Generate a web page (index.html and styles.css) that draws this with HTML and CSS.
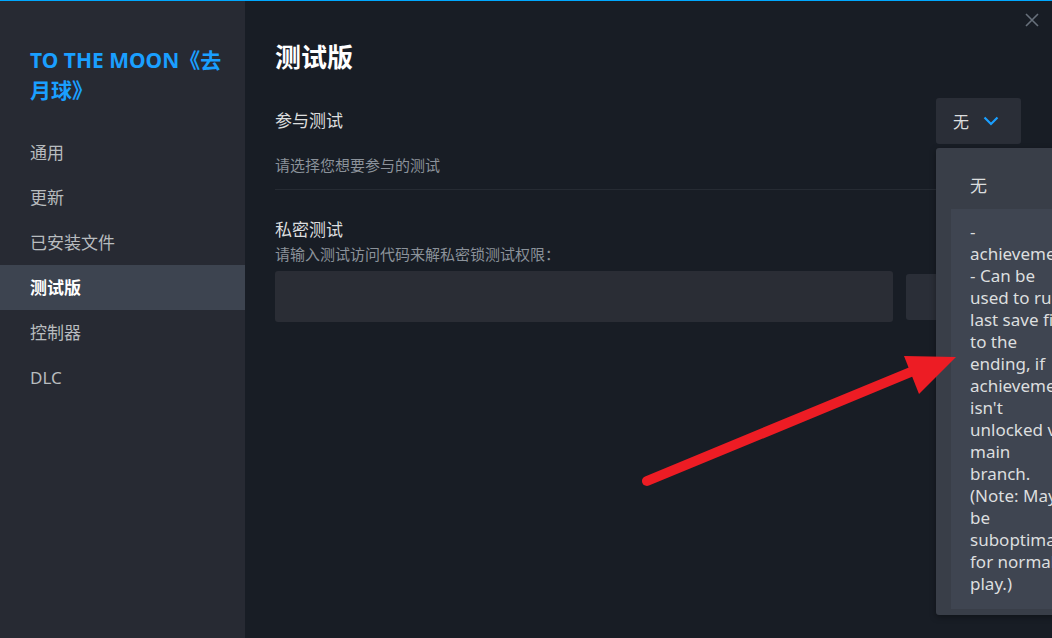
FILE: index.html
```html
<!DOCTYPE html>
<html lang="zh-CN">
<head>
<meta charset="UTF-8">
<meta name="viewport" content="width=device-width, initial-scale=1.0">
<title>测试版</title>
<link rel="stylesheet" href="styles.css">
</head>
<body>
<div class="window">
  <!-- Sidebar -->
  <div class="sidebar">
    <h2 class="game-title">TO THE MOON《去月球》</h2>
    <ul class="nav">
      <li>通用</li>
      <li>更新</li>
      <li>已安装文件</li>
      <li class="active">测试版</li>
      <li>控制器</li>
      <li>DLC</li>
    </ul>
  </div>

  <!-- Main -->
  <div class="main">
    <button type="button" class="close" aria-label="关闭">
      <svg width="14" height="14" viewBox="0 0 14 14"><path d="M1 1 L13 13 M13 1 L1 13" stroke="#67707b" stroke-width="1.6" fill="none"/></svg>
    </button>

    <h1>测试版</h1>

    <div class="row">
      <span class="label">参与测试</span>
      <div class="select">
        <button type="button" class="select-btn">
          <span>无</span>
          <svg width="16" height="10" viewBox="0 0 16 10"><path d="M1.5 1.5 L8 8 L14.5 1.5" stroke="#1a9fff" stroke-width="2.2" fill="none"/></svg>
        </button>
        <div class="menu">
          <div class="option">无</div>
          <!-- description is wrapped by the client at a narrow width -->
          <div class="option hover">-<br>achievement<br>- Can be<br>used to run<br>last save file<br>to the<br>ending, if<br>achievement<br>isn't<br>unlocked via<br>main<br>branch.<br>(Note: May<br>be<br>suboptimal<br>for normal<br>play.)</div>
        </div>
      </div>
    </div>
    <p class="hint">请选择您想要参与的测试</p>

    <div class="group">
      <div class="label">私密测试</div>
      <p class="hint tight">请输入测试访问代码来解私密锁测试权限：</p>
      <div class="code-row">
        <input type="text" class="code-input">
        <button type="button" class="code-btn">检查</button>
      </div>
    </div>
  </div>
</div>

<!-- annotation arrow -->
<svg class="arrow" width="1052" height="638" viewBox="0 0 1052 638">
  <line x1="647" y1="481" x2="918" y2="369" stroke="#ed1c24" stroke-width="10" stroke-linecap="round"/>
  <polygon points="904,356 956,357 919,394" fill="#ed1c24"/>
</svg>
</body>
</html>
```

FILE: styles.css
```css
html, body {
  margin: 0;
  height: 100%;
  overflow: hidden;
}
body {
  font-family: 'Noto Sans', 'Noto Sans CJK SC', sans-serif;
  background-color: #181d25;
  color: #dcdedf;
}
.window {
  display: flex;
  height: 100%;
  border-top: 1px solid #00a8ff;
  box-sizing: border-box;
}
.sidebar {
  width: 245px;
  flex-shrink: 0;
  background-color: #272a33;
}
.game-title {
  margin: 44px 20px 0 30px;
  font-size: 21px;
  line-height: 30px;
  font-weight: bold;
  color: #1a9fff;
}
.nav {
  list-style: none;
  margin: 25px 0 0;
  padding: 0;
}
.nav li {
  height: 45px;
  line-height: 45px;
  padding-left: 30px;
  font-size: 17px;
  color: #b8bcbf;
}
.nav li.active {
  background-color: #3d4450;
  color: #ffffff;
  font-weight: bold;
}
.main {
  flex: 1;
  position: relative;
  padding: 0 31px 0 30px;
}
.close {
  position: absolute;
  top: 12px;
  right: 12px;
  background: none;
  border: none;
  padding: 0;
  width: 16px;
  height: 16px;
  cursor: pointer;
}
h1 {
  margin: 38px 0 0;
  font-size: 26px;
  line-height: 36px;
  font-weight: bold;
  color: #ffffff;
}
.row {
  display: flex;
  justify-content: space-between;
  align-items: center;
  margin-top: 23px;
}
.row .label {
  margin-bottom: 4px;
}
.label {
  font-size: 17px;
  color: #dcdedf;
}
.hint {
  margin: 10px 0 0;
  font-size: 15px;
  line-height: 22px;
  color: #8b929a;
  padding-bottom: 13px;
  border-bottom: 1px solid #262b33;
}
.hint.tight {
  margin-top: 2px;
  padding-bottom: 6px;
  border-bottom: none;
}
.select {
  position: relative;
}
.select-btn {
  display: flex;
  align-items: center;
  gap: 14px;
  width: 85px;
  height: 46px;
  padding: 0 0 0 17px;
  background-color: #2a2e37;
  border: none;
  border-radius: 3px;
  color: #dcdedf;
  font-family: inherit;
  font-size: 16px;
}
.menu {
  position: absolute;
  top: 50px;
  left: 0;
  width: 180px;
  padding: 15px 15px 6px;
  background-color: #393e48;
  border-radius: 3px;
  box-shadow: 0 2px 6px rgba(0, 0, 0, 0.35);
  z-index: 2;
}
.option {
  padding: 12px 19px;
  font-size: 17px;
  line-height: 22px;
  color: #dcdedf;
  white-space: nowrap;
}
.option.hover {
  background-color: #3f4551;
  padding-top: 12px;
  padding-bottom: 14px;
}
.group {
  margin-top: 26px;
}
.code-row {
  display: flex;
  align-items: center;
  gap: 13px;
}
.code-input {
  width: 618px;
  height: 51px;
  box-sizing: border-box;
  background-color: #2a2d35;
  border: none;
  border-radius: 3px;
}
.code-btn {
  flex: 1;
  height: 46px;
  background-color: #2a2e37;
  border: none;
  border-radius: 3px;
  color: #dcdedf;
  font-family: inherit;
  font-size: 15px;
}
.arrow {
  position: absolute;
  top: 0;
  left: 0;
  pointer-events: none;
  z-index: 5;
}
```
